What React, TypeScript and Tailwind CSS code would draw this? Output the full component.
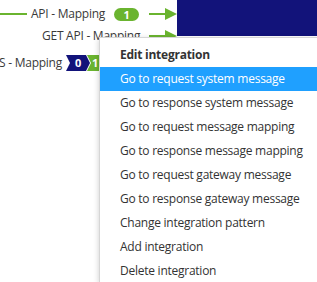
import React from 'react';

const font = { fontFamily: '"Open Sans", "Noto Sans", sans-serif', letterSpacing: '-0.25px' };

function Arrow({ w }: { w: number }) {
  return (
    <svg width={w} height="14" viewBox={`0 0 ${w} 14`} className="block">
      <rect x="0" y="6" width={w - 10} height="2" fill="#6ab42f" />
      <polygon points={`${w - 12},1 ${w},7 ${w - 12},13`} fill="#6ab42f" />
    </svg>
  );
}

function Chevrons() {
  return (
    <svg width="36" height="16" viewBox="0 0 36 16" className="block">
      <polygon points="0,0 20,0 24,8 20,16 0,16 4,8" fill="#12137a" />
      <polygon points="21,0 36,0 36,16 21,16 25,8" fill="#6ab42f" />
      <text x="12" y="12" fill="#fff" fontSize="11" fontWeight="700" textAnchor="middle" style={font}>0</text>
      <text x="29" y="12" fill="#fff" fontSize="11" fontWeight="700" textAnchor="middle" style={font}>1</text>
    </svg>
  );
}

const items = [
  'Go to request system message',
  'Go to response system message',
  'Go to request message mapping',
  'Go to response message mapping',
  'Go to request gateway message',
  'Go to response gateway message',
  'Change integration pattern',
  'Add integration',
  'Delete integration',
];

export default function App() {
  return (
    <div className="relative w-[317px] h-[282px] overflow-hidden bg-white text-[12px] text-[#3a3a3a] whitespace-nowrap" style={font}>
      {/* diagram */}
      <div className="flex">
        <div className="w-[177px] shrink-0">
          <div className="flex items-center h-[28px]">
            <div className="w-[27px] h-[2px] bg-[#6ab42f] shrink-0" />
            <span className="ml-[4px] w-[76px] leading-none">API - Mapping</span>
            <span className="ml-[7px] w-[25px] h-[13px] rounded-full bg-[#6ab42f] text-white text-[11px] font-bold flex items-center justify-center leading-none">1</span>
            <div className="ml-[10px]"><Arrow w={28} /></div>
          </div>
          <div className="flex items-center h-[16px]">
            <span className="ml-[42px] leading-none">GET API - Mapping</span>
            <div className="ml-auto"><Arrow w={28} /></div>
          </div>
        </div>
        <div className="flex-1 h-[36px] bg-[#12137a]" />
      </div>
      <div className="flex items-center h-[18px] mt-[10px]">
        <span className="ml-[-1px] leading-none">S - Mapping</span>
        <div className="ml-[4px]"><Chevrons /></div>
      </div>

      {/* context menu */}
      <div className="absolute left-[99px] top-[37px] right-0 bottom-0 bg-white border-l border-t border-[#d6d6d6] shadow-[0_2px_6px_rgba(0,0,0,0.2)] pt-[5px]">
        <div className="h-[24px] flex items-center pl-[20px] font-bold text-[#333]">Edit integration</div>
        {items.map((t, i) => (
          <div
            key={t}
            className={`h-[24px] flex items-center pl-[20px] ${i === 0 ? 'bg-[#1fa0ff] text-white' : 'text-[#333]'}`}
          >
            {t}
          </div>
        ))}
      </div>
    </div>
  );
}
